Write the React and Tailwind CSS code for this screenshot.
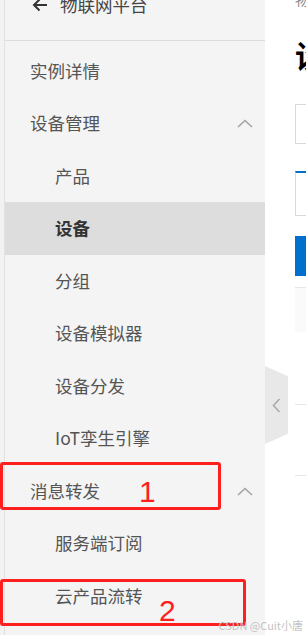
import React from 'react';

const menu = [
  { label: '实例详情', level: 1 },
  { label: '设备管理', level: 1, chevron: true },
  { label: '产品', level: 2 },
  { label: '设备', level: 2, active: true },
  { label: '分组', level: 2 },
  { label: '设备模拟器', level: 2 },
  { label: '设备分发', level: 2 },
  { label: 'IoT孪生引擎', level: 2 },
  { label: '消息转发', level: 1, chevron: true },
  { label: '服务端订阅', level: 2 },
  { label: '云产品流转', level: 2 },
];

const ChevronUp = () => (
  <svg width="16" height="9" viewBox="0 0 16 9" fill="none">
    <path d="M1 8L8 1.5L15 8" stroke="#a3a3a3" strokeWidth="1.6" />
  </svg>
);

const App = () => {
  return (
    <div
      className="relative flex h-[635px] w-[306px] overflow-hidden bg-white"
      style={{ fontFamily: '"Noto Sans CJK SC", "Noto Sans", sans-serif' }}
    >
      {/* left edge */}
      <div className="w-[5px] shrink-0 border-r border-[#e2e2e2] bg-[#f2f2f2]" />

      {/* sidebar */}
      <div className="flex w-[260px] shrink-0 flex-col bg-[#f4f4f4]">
        <div className="h-[41px] shrink-0 border-b border-[#dcdcdc]">
          <div className="-mt-[8px] flex items-center pl-[27px] text-[17.5px] leading-[26px] text-[#444]">
            <svg width="16" height="14" viewBox="0 0 16 14" fill="none" className="mr-[12px]">
              <path d="M15 7H2M7.5 1.5L2 7l5.5 5.5" stroke="#333" strokeWidth="2" />
            </svg>
            <span>物联网平台</span>
          </div>
        </div>
        <div className="pt-[3.75px]">
          {menu.map((item) => (
            <div
              key={item.label}
              className={`flex h-[52.5px] items-center pr-[12px] text-[17.5px] ${
                item.level === 1 ? 'pl-[25px]' : 'pl-[50px]'
              } ${item.active ? 'bg-[#dddddd] font-bold text-[#333]' : 'text-[#555]'}`}
            >
              <span className="flex-1">{item.label}</span>
              {item.chevron && <ChevronUp />}
            </div>
          ))}
        </div>
      </div>

      {/* content */}
      <div className="relative min-w-0 flex-1 overflow-hidden whitespace-nowrap bg-white pl-[30px]">
        <div className="-mt-[9px] text-[14px] leading-[16px] text-[#888]">物联网平台</div>
        <div className="mt-[31px] text-[31px] font-bold leading-[34px] text-black">设备</div>
        <div className="mt-[32px] h-[40px] w-[300px] border border-[#d9d9d9]" />
        <div className="mt-[27px] h-[45px] w-[300px] border border-[#d9d9d9] border-t-[2px] border-t-[#0070cc]" />
        <div className="mt-[20px] h-[40px] w-[300px] bg-[#0070cc]" />
        <div className="mt-[11px] h-[45px] w-[300px] border-t border-[#e6e6e6] bg-[#fafafa]" />
        <div className="mt-[72px] w-[300px] border-t border-[#e6e6e6]" />
        <div className="mt-[70px] w-[300px] border-t border-[#e6e6e6]" />

        {/* collapse handle */}
        <div className="absolute left-0 top-[366px] flex h-[78px] w-[23px] items-center justify-center bg-[#e8e8e8] [clip-path:polygon(0_0,100%_13%,100%_87%,0_100%)]">
          <svg width="9" height="15" viewBox="0 0 9 15" fill="none">
            <path d="M7.5 1L1.5 7.5L7.5 14" stroke="#a8a8a8" strokeWidth="1.5" />
          </svg>
        </div>
      </div>

      {/* annotations */}
      <div className="absolute left-0 top-[462px] h-[48px] w-[221px] rounded-[3px] border-[3px] border-[#ff1f1f]" />
      <div className="absolute left-[139px] top-[475px] text-[30px] leading-[34px] text-[#ff1f1f]" style={{ fontFamily: '"Liberation Sans", sans-serif' }}>1</div>
      <div className="absolute left-0 top-[579px] h-[47px] w-[246px] rounded-[3px] border-[3px] border-[#ff1f1f]" />
      <div className="absolute left-[159px] top-[594px] text-[30px] leading-[34px] text-[#ff1f1f]" style={{ fontFamily: '"Liberation Sans", sans-serif' }}>2</div>

      {/* watermark */}
      <div className="absolute right-[3px] top-[618px] whitespace-nowrap text-[11px] leading-[14px] text-[#c4c4c4]">CSDN @Cuit小唐</div>
    </div>
  );
};

export default App;
